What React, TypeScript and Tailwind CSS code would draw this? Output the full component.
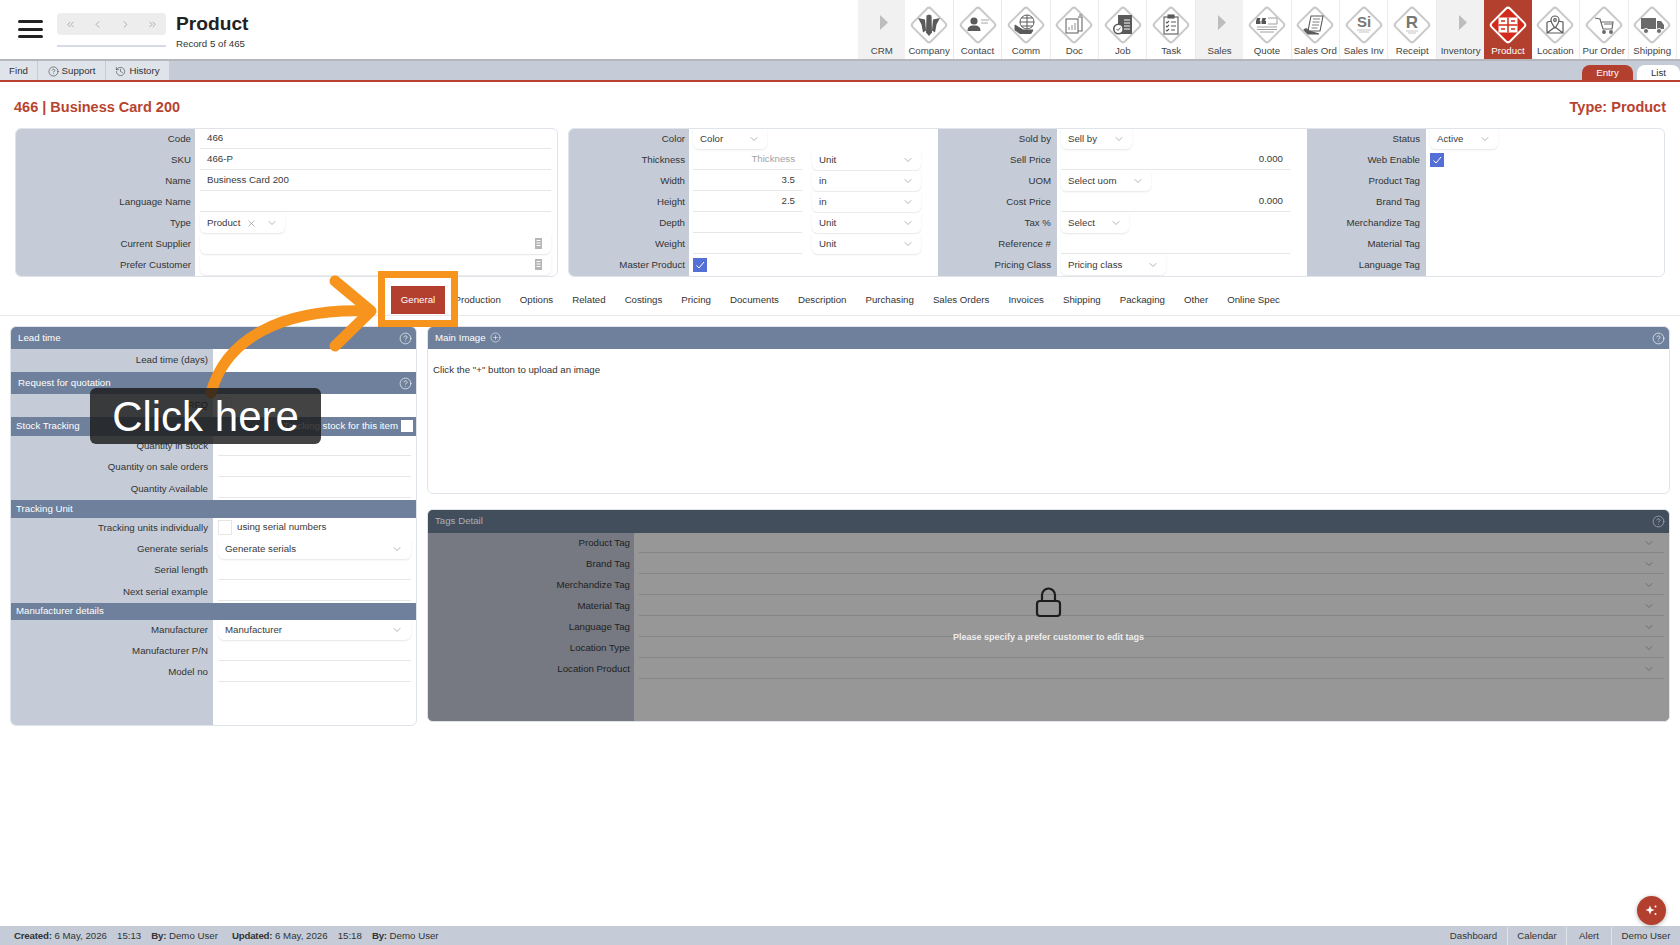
import type { ReactNode } from 'react';
import { ChevronDown, ChevronLeft, ChevronRight, ChevronsLeft, ChevronsRight, CircleHelp, CirclePlus, History, X } from 'lucide-react';

const tileIcons: Record<string, ReactNode> = {
  Company: (
    <g fill="#5a5a5a">
      <path d="M9 13l7 1.500 1 11-3 2-1.500-8z" />
      <path d="M17.500 10.500l2.500-1 2.500 1 .5 17-3 3.500-3-3.500z" />
      <path d="M31 13l-7 1.500-1 11 3 2 1.500-8z" />
    </g>
  ),
  Contact: (
    <g>
      <circle cx="16" cy="16" r="3.600" fill="#5a5a5a" />
      <path d="M9.500 26c0-4 2-5 4.500-5.500h4c2.500.5 4.500 1.500 4.500 5.500z" fill="#5a5a5a" />
      <path d="M23 15h8M23 18h7" stroke="#a5a5a5" strokeWidth="1.200" />
    </g>
  ),
  Comm: (
    <g fill="none" stroke="#5a5a5a" strokeWidth="1">
      <circle cx="21" cy="17" r="7" />
      <path d="M14 17h14M21 10v14M15.500 13h11M15.500 21h11" />
      <path d="M9 20l8 5h10l-2 3.500H14l-5-3.500z" fill="#5a5a5a" />
    </g>
  ),
  Doc: (
    <g fill="none" stroke="#6a6a6a" strokeWidth="1.100">
      <rect x="12" y="14" width="12" height="14" />
      <path d="M24 12h4v14h-4M25 10h3" />
      <path d="M15 25v-3M18 25v-5M21 25v-7" stroke="#9a9a9a" />
    </g>
  ),
  Job: (
    <g>
      <rect x="15" y="10" width="14" height="19" fill="#5a5a5a" />
      <path d="M21 15h6M21 18h6M21 21h6M21 24h6" stroke="#fff" />
      <circle cx="15.500" cy="24" r="4.700" fill="#fff" stroke="#5a5a5a" strokeWidth="1.600" />
      <path d="M13.500 24l1.500 1.500 2.500-3" stroke="#5a5a5a" fill="none" />
    </g>
  ),
  Task: (
    <g fill="none" stroke="#5a5a5a" strokeWidth="1.100">
      <rect x="13" y="12" width="14" height="17" />
      <rect x="17" y="10" width="6" height="3" fill="#5a5a5a" />
      <path d="M15 17l1 1 2-2M15 21l1 1 2-2M15 25l1 1 2-2M20 17h5M20 21h5M20 25h4" />
    </g>
  ),
  Quote: (
    <g>
      <path d="M10 13h3.500l-1 3h1v3H9v-3zM15.500 13H19l-1 3h1v3h-4.500v-3z" fill="#555" />
      <path d="M21 13h9v6h-9M10 22h20M10 24.500h20M13 27h14" fill="none" stroke="#a0a0a0" strokeWidth="1" />
    </g>
  ),
  'Sales Ord': (
    <g fill="none" stroke="#5a5a5a" strokeWidth="1.100">
      <path d="M16 11h12l-3 15H13z" fill="#fff" />
      <path d="M18 14h7M17.500 17h7M17 20h7M16.500 23h6" stroke="#808080" />
      <path d="M9 25c2-2 4-1 5 1l10 3H13z" fill="#5a5a5a" />
    </g>
  ),
  'Sales Inv': (
    <g>
      <text x="20" y="22" textAnchor="middle" fontSize="15" fontWeight="700" fontFamily="Liberation Sans" fill="#777">Si</text>
      <path d="M13 25h14M15 27h10" stroke="#c4c4c4" />
    </g>
  ),
  Receipt: (
    <g>
      <text x="20" y="23" textAnchor="middle" fontSize="17" fontWeight="700" fontFamily="Liberation Sans" fill="#777">R</text>
      <path d="M14 26h12M16 28h8" stroke="#c4c4c4" />
    </g>
  ),
  Location: (
    <g fill="none" stroke="#5a5a5a" strokeWidth="1.200">
      <path d="M12 17l5-1M23 16l5 1v11H12V17M12 28l8-6 8 6" />
      <path d="M20 23c-3-4-4-6-4-8a4 4 0 0 1 8 0c0 2-1 4-4 8z" fill="#fff" />
      <circle cx="20" cy="15" r="1.300" />
    </g>
  ),
  'Pur Order': (
    <g fill="none" stroke="#6a6a6a" strokeWidth="1.200">
      <path d="M11 13l5 1 3 10h9l1-7H17M20 19h8" />
      <circle cx="20" cy="27" r="1.300" fill="#6a6a6a" />
      <circle cx="27" cy="27" r="1.300" fill="#6a6a6a" />
    </g>
  ),
  Shipping: (
    <g fill="#6a6a6a">
      <rect x="9" y="13" width="15" height="11" />
      <path d="M25 16h4l3 4v4h-7z" />
      <circle cx="14" cy="26" r="2.500" stroke="#fff" />
      <circle cx="27" cy="26" r="2.500" stroke="#fff" />
    </g>
  ),
};

const tiles = ['CRM', 'Company', 'Contact', 'Comm', 'Doc', 'Job', 'Task', 'Sales', 'Quote', 'Sales Ord', 'Sales Inv', 'Receipt', 'Inventory', 'Product', 'Location', 'Pur Order', 'Shipping'];
const sectionTiles = ['CRM', 'Sales', 'Inventory'];
const tabs = ['Production', 'Options', 'Related', 'Costings', 'Pricing', 'Documents', 'Description', 'Purchasing', 'Sales Orders', 'Invoices', 'Shipping', 'Packaging', 'Other', 'Online Spec'];
const tagRows = ['Product Tag', 'Brand Tag', 'Merchandize Tag', 'Material Tag', 'Language Tag', 'Location Type', 'Location Product'];

function NavTile({ name }: Readonly<{ name: string }>) {
  if (sectionTiles.includes(name)) {
    return (
      <div className="flex flex-1 flex-col items-center bg-[#f1f1f1] pt-[15px]">
        <svg width="10" height="15" viewBox="0 0 10 15" className="ml-[4px]">
          <path d="M1 0l8 7.500-8 7.500z" fill="#bdbdbd" />
        </svg>
        <span className="mt-[15px] text-[9.7px] leading-[12px] text-[#444]">{name}</span>
      </div>
    );
  }
  const active = name === 'Product';
  return (
    <div className={`flex flex-1 flex-col items-center pt-[5px] ${active ? 'bg-[#b33f2e]' : 'border-r border-[#ebebeb] bg-white'}`}>
      <svg width="40" height="40" viewBox="0 0 40 40" className="shrink-0">
        <rect x="7" y="7" width="26" height="26" rx="3" transform="rotate(45 20 20)" fill={active ? '#d22b1c' : '#fff'} stroke={active ? '#fff' : '#c9c9c9'} strokeWidth="2" />
        {active ? (
          <g>
            <rect x="10.500" y="12.500" width="19" height="15" fill="#fff" />
            <path d="M20 12.500v15M10.500 20h19M13 16h4M23 16h4M13 24h4M23 24h4" stroke="#d22b1c" strokeWidth="1.500" />
          </g>
        ) : (
          tileIcons[name]
        )}
      </svg>
      <span className={`text-[9.7px] leading-[12px] ${active ? 'text-white' : 'text-[#444]'}`}>{name}</span>
    </div>
  );
}

function SelectBox({ value, width, full }: Readonly<{ value: string; width?: string; full?: boolean }>) {
  return (
    <div className={`flex h-[20px] items-center justify-between rounded-b-md bg-white pl-[7px] shadow-[0_1px_2px_rgba(0,0,0,0.1)] ${full ? 'flex-1 pr-[8px]' : `pr-[7px] ${width}`}`}>
      <span>{value}</span>
      <ChevronDown size={12} strokeWidth={1} className="text-[#666]" />
    </div>
  );
}

function TextField({ value, className, align }: Readonly<{ value?: string; className?: string; align?: 'right' }>) {
  return (
    <div className={`flex h-[20px] items-center border-b border-[#e4e6ea] px-[7px] ${align === 'right' ? 'justify-end' : ''} ${className ?? 'flex-1'}`}>
      {value}
    </div>
  );
}

function CheckMark() {
  return (
    <div className="flex h-[14px] w-[14px] items-center justify-center bg-[#5470d6]">
      <svg width="10" height="10" viewBox="0 0 10 10" fill="none" stroke="#fff" strokeWidth="1">
        <path d="M1.500 5.500l2.500 2.500 5-6" />
      </svg>
    </div>
  );
}

function OpenBox() {
  return <div className="h-[15px] w-[14px] border border-[#e5e5e5] bg-white" />;
}

function BuildingGlyph() {
  return (
    <svg width="7" height="11" viewBox="0 0 7 11" className="absolute right-[15px] top-[4px]">
      <rect width="7" height="11" fill="#b5b5b5" />
      <path d="M1.500 2.500h4M1.500 5h4M1.500 7.500h4" stroke="#fff" />
    </svg>
  );
}

function FormRow({ label, labelWidth, inset = 'pl-[4px]', children }: Readonly<{ label: string; labelWidth: string; inset?: string; children?: ReactNode }>) {
  return (
    <div className="flex h-[21px]">
      <div className={`flex shrink-0 items-center justify-end bg-[#c5ccd8] text-[#333] ${labelWidth}`}>{label}</div>
      <div className={`relative flex flex-1 items-start gap-[10px] pr-[6px] ${inset}`}>{children}</div>
    </div>
  );
}

function MainRow({ label, children }: Readonly<{ label: string; children?: ReactNode }>) {
  return (
    <FormRow label={label} labelWidth="w-[179px] pr-[4px]" inset="pl-[5px]">
      {children}
    </FormRow>
  );
}

function MeasureRow({ label, value, placeholder, unit }: Readonly<{ label: string; value?: string; placeholder?: string; unit: string }>) {
  return (
    <FormRow label={label} labelWidth="w-[120px] pr-[4px]">
      <div className={`flex h-[20px] w-[109px] items-center justify-end border-b border-[#e4e6ea] px-[7px] ${placeholder ? 'text-[#a3a3a3]' : ''}`}>
        {value ?? placeholder}
      </div>
      <SelectBox value={unit} width="w-[109px]" />
    </FormRow>
  );
}

function SectionBar({ title, className, children }: Readonly<{ title: string; className: string; children?: ReactNode }>) {
  return (
    <div className={`flex shrink-0 items-center justify-between bg-[#6e809b] text-white ${className}`}>
      <span>{title}</span>
      {children}
    </div>
  );
}

function HelpIcon() {
  return <CircleHelp size={13} strokeWidth={1.4} className="text-[#eef1f5]" />;
}

function LeftRow({ label, height = 'h-[21px]', children }: Readonly<{ label: string; height?: string; children?: ReactNode }>) {
  return (
    <div className={`flex ${height}`}>
      <div className="flex w-[202px] shrink-0 items-center justify-end bg-[#c5ccd8] pr-[5px] text-[#333]">{label}</div>
      <div className="flex flex-1 items-start pl-[5px] pr-[5px]">{children}</div>
    </div>
  );
}

export default function App() {
  return (
    <div className="relative flex h-[945px] w-[1680px] flex-col overflow-hidden bg-white font-['Liberation_Sans',Arial,sans-serif] text-[9.7px] text-[#3a3a3a]">
      <header className="flex h-[61px] shrink-0 border-b-2 border-[#b4b8bd]">
        <div className="flex w-[57px] flex-col items-center gap-[4.500px] pl-[4px] pt-[20px]">
          <div className="h-[3px] w-[25px] rounded-sm bg-[#222]" />
          <div className="h-[3px] w-[25px] rounded-sm bg-[#222]" />
          <div className="h-[3px] w-[25px] rounded-sm bg-[#222]" />
        </div>
        <div className="w-[109px] pt-[13px]">
          <div className="flex h-[22px] items-center justify-between rounded bg-[#ededed] px-[8px] text-[#8d8d8d]">
            <ChevronsLeft size={11} strokeWidth={1.5} />
            <ChevronLeft size={11} strokeWidth={1.5} />
            <ChevronRight size={11} strokeWidth={1.5} />
            <ChevronsRight size={11} strokeWidth={1.5} />
          </div>
          <div className="mt-[10px] h-[1.500px] bg-[#d5dce6]" />
        </div>
        <div className="ml-[10px] pt-[14px]">
          <div className="text-[19.200px] font-bold leading-[20px] text-[#222]">Product</div>
          <div className="mt-[4px] text-[9.700px] leading-[12px] text-[#333]">Record 5 of 465</div>
        </div>
        <nav className="ml-auto mr-[3px] flex w-[819px]">
          {tiles.map((name) => (
            <NavTile key={name} name={name} />
          ))}
        </nav>
      </header>

      <div className="flex h-[21px] shrink-0 justify-between border-b-2 border-[#b9402f] bg-[#c5ccd8]">
        <div className="flex gap-px pb-0 text-[#333]">
          <div className="flex w-[37px] items-center justify-center bg-[#dfe3ea] pt-px">Find</div>
          <div className="flex w-[67px] items-center justify-center gap-[3px] bg-[#dfe3ea] pt-px">
            <CircleHelp size={11} strokeWidth={1.200} />
            Support
          </div>
          <div className="flex w-[63px] items-center justify-center gap-[3px] bg-[#dfe3ea] pt-px">
            <History size={11} strokeWidth={1.200} />
            History
          </div>
        </div>
        <div className="flex items-end gap-[4px] pt-[4px]">
          <div className="flex h-[15px] w-[51px] items-center justify-center rounded-t-lg bg-[#b33f2e] pt-px text-white">Entry</div>
          <div className="flex h-[15px] w-[43px] items-center justify-center rounded-t-lg bg-white pt-px text-[#333]">List</div>
        </div>
      </div>

      <div className="flex h-[46px] shrink-0 justify-between px-[14px] pt-[16px] text-[14.500px] font-bold leading-[18px] text-[#b8432f]">
        <span>466 | Business Card 200</span>
        <span>Type: Product</span>
      </div>

      <div className="flex shrink-0 gap-[10px] pl-[15px] pr-[15px]">
        <section className="w-[543px] overflow-hidden rounded-md border border-[#dfe3ea]">
          <MainRow label="Code"><TextField value="466" /></MainRow>
          <MainRow label="SKU"><TextField value="466-P" /></MainRow>
          <MainRow label="Name"><TextField value="Business Card 200" /></MainRow>
          <MainRow label="Language Name"><TextField /></MainRow>
          <MainRow label="Type">
            <div className="flex h-[20px] w-[85px] items-center rounded-b-md bg-white pl-[7px] shadow-[0_1px_2px_rgba(0,0,0,0.1)]">
              <span>Product</span>
              <X size={11} strokeWidth={1} className="ml-[6px] text-[#666]" />
              <ChevronDown size={12} strokeWidth={1} className="ml-[9px] text-[#666]" />
            </div>
          </MainRow>
          <MainRow label="Current Supplier">
            <div className="h-[20px] flex-1 rounded-b-md shadow-[0_1px_2px_rgba(0,0,0,0.1)]" />
            <BuildingGlyph />
          </MainRow>
          <MainRow label="Prefer Customer">
            <div className="h-[20px] flex-1 rounded-b-md shadow-[0_1px_2px_rgba(0,0,0,0.1)]" />
            <BuildingGlyph />
          </MainRow>
        </section>

        <section className="flex flex-1 overflow-hidden rounded-md border border-[#dfe3ea]">
          <div className="w-[369px]">
            <FormRow label="Color" labelWidth="w-[120px] pr-[4px]"><SelectBox value="Color" width="w-[74px]" /></FormRow>
            <MeasureRow label="Thickness" placeholder="Thickness" unit="Unit" />
            <MeasureRow label="Width" value="3.5" unit="in" />
            <MeasureRow label="Height" value="2.5" unit="in" />
            <MeasureRow label="Depth" value="" unit="Unit" />
            <MeasureRow label="Weight" value="" unit="Unit" />
            <FormRow label="Master Product" labelWidth="w-[120px] pr-[4px]"><div className="pt-[3px]"><CheckMark /></div></FormRow>
          </div>
          <div className="w-[369px]">
            <FormRow label="Sold by" labelWidth="w-[119px] pr-[6px]"><SelectBox value="Sell by" width="w-[71px]" /></FormRow>
            <FormRow label="Sell Price" labelWidth="w-[119px] pr-[6px]"><TextField value="0.000" align="right" className="w-[229px]" /></FormRow>
            <FormRow label="UOM" labelWidth="w-[119px] pr-[6px]"><SelectBox value="Select uom" width="w-[90px]" /></FormRow>
            <FormRow label="Cost Price" labelWidth="w-[119px] pr-[6px]"><TextField value="0.000" align="right" className="w-[229px]" /></FormRow>
            <FormRow label="Tax %" labelWidth="w-[119px] pr-[6px]"><SelectBox value="Select" width="w-[68px]" /></FormRow>
            <FormRow label="Reference #" labelWidth="w-[119px] pr-[6px]"><TextField className="w-[229px]" /></FormRow>
            <FormRow label="Pricing Class" labelWidth="w-[119px] pr-[6px]"><SelectBox value="Pricing class" width="w-[105px]" /></FormRow>
          </div>
          <div className="flex-1">
            <FormRow label="Status" labelWidth="w-[119px] pr-[6px]"><SelectBox value="Active" width="w-[68px]" /></FormRow>
            <FormRow label="Web Enable" labelWidth="w-[119px] pr-[6px]"><div className="pt-[3px]"><CheckMark /></div></FormRow>
            <FormRow label="Product Tag" labelWidth="w-[119px] pr-[6px]" />
            <FormRow label="Brand Tag" labelWidth="w-[119px] pr-[6px]" />
            <FormRow label="Merchandize Tag" labelWidth="w-[119px] pr-[6px]" />
            <FormRow label="Material Tag" labelWidth="w-[119px] pr-[6px]" />
            <FormRow label="Language Tag" labelWidth="w-[119px] pr-[6px]" />
          </div>
        </section>
      </div>

      <div className="mt-[9px] flex h-[30px] shrink-0 items-stretch border-b border-[#e8e8e8] pl-[391px] text-[#333]">
        <div className="mb-px flex w-[54px] items-center justify-center bg-[#b33f2e] text-white">General</div>
        {tabs.map((tab) => (
          <div key={tab} className="flex items-center px-[9.500px]">{tab}</div>
        ))}
      </div>

      <div className="mt-[10px] flex flex-1 items-start gap-[10px] px-[10px]">
        <section className="flex h-[400px] w-[407px] flex-col overflow-hidden rounded-md border border-[#dfe3ea]">
          <SectionBar title="Lead time" className="h-[22px] pl-[7px] pr-[4px]"><HelpIcon /></SectionBar>
          <LeftRow label="Lead time (days)" height="h-[23px]" />
          <SectionBar title="Request for quotation" className="h-[22px] pl-[7px] pr-[4px]"><HelpIcon /></SectionBar>
          <LeftRow label="RFQ" height="h-[23px]"><div className="pt-[3px]"><OpenBox /></div></LeftRow>
          <SectionBar title="Stock Tracking" className="h-[19px] pl-[5px] pr-[3px]">
            <div className="flex items-center gap-[3px]">
              Tracking stock for this item
              <div className="h-[12px] w-[12px] bg-white" />
            </div>
          </SectionBar>
          <LeftRow label="Quantity in stock"><TextField /></LeftRow>
          <LeftRow label="Quantity on sale orders"><TextField /></LeftRow>
          <LeftRow label="Quantity Available" height="h-[22px]"><TextField /></LeftRow>
          <SectionBar title="Tracking Unit" className="h-[18px] pl-[5px]" />
          <LeftRow label="Tracking units individually">
            <div className="flex items-center gap-[5px] pt-[2px]">
              <OpenBox />
              <span>using serial numbers</span>
            </div>
          </LeftRow>
          <LeftRow label="Generate serials"><SelectBox value="Generate serials" full /></LeftRow>
          <LeftRow label="Serial length"><TextField /></LeftRow>
          <LeftRow label="Next serial example" height="h-[22px]"><TextField /></LeftRow>
          <SectionBar title="Manufacturer details" className="h-[17px] pl-[5px]" />
          <LeftRow label="Manufacturer"><SelectBox value="Manufacturer" full /></LeftRow>
          <LeftRow label="Manufacturer P/N"><TextField /></LeftRow>
          <LeftRow label="Model no"><TextField /></LeftRow>
          <LeftRow label="" height="flex-1" />
        </section>

        <div className="flex flex-1 flex-col">
          <section className="h-[168px] overflow-hidden rounded-md border border-[#dfe3ea]">
            <div className="flex h-[22px] items-center justify-between bg-[#6e809b] pl-[7px] pr-[4px] text-white">
              <span className="flex items-center gap-[4px]">
                Main Image
                <CirclePlus size={11} strokeWidth={1.200} />
              </span>
              <HelpIcon />
            </div>
            <p className="pl-[5px] pt-[15px] leading-[12px] text-[#333]">Click the "+" button to upload an image</p>
          </section>

          <section className="relative mt-[15px] h-[213px] overflow-hidden rounded-md border border-[#dfe3ea] bg-[#979797]">
            <div className="flex h-[23px] items-center justify-between bg-[#434e5c] pl-[7px] pr-[4px] text-[#a9afb8]">
              <span>Tags Detail</span>
              <CircleHelp size={13} strokeWidth={1.400} className="text-[#a9afb8]" />
            </div>
            <div className="flex h-[189px] flex-col bg-[#979797]">
              {tagRows.map((row) => (
                <div key={row} className="flex h-[21px]">
                  <div className="flex w-[206px] shrink-0 items-center justify-end bg-[#767982] pr-[4px] text-[#1f1f1f]">{row}</div>
                  <div className="ml-[5px] flex h-[20px] flex-1 items-center justify-end border-b border-[#858585] pr-[9px]">
                    <ChevronDown size={12} strokeWidth={1} className="text-[#444]" />
                  </div>
                  <div className="w-[5px] shrink-0" />
                </div>
              ))}
              <div className="w-[206px] flex-1 bg-[#767982]" />
            </div>
            <div className="absolute inset-x-0 top-[77px] flex flex-col items-center">
              <svg width="27" height="31" viewBox="0 0 27 31" fill="none" stroke="#1d1d1d" strokeWidth="2.200">
                <path d="M7 15V8a6.500 6.500 0 0 1 13 0v7" />
                <rect x="2" y="14" width="23" height="15" rx="3" />
              </svg>
              <span className="mt-[13px] text-[9px] font-bold leading-[12px] text-[#eeeeee]">Please specify a prefer customer to edit tags</span>
            </div>
          </section>
        </div>
      </div>

      <footer className="flex h-[19px] shrink-0 items-stretch justify-between bg-[#c5ccd8] pl-[14px] pt-px text-[#333]">
        <div className="flex items-center gap-[14px]">
          <span className="flex gap-[10px]">
            <span><b className="tracking-[-0.2px]">Created:</b> 6 May, 2026</span>
            <span>15:13</span>
            <span><b className="tracking-[-0.2px]">By:</b> Demo User</span>
          </span>
          <span className="flex gap-[10px]">
            <span><b className="tracking-[-0.2px]">Updated:</b> 6 May, 2026</span>
            <span>15:18</span>
            <span><b className="tracking-[-0.2px]">By:</b> Demo User</span>
          </span>
        </div>
        <div className="flex">
          <div className="flex w-[68px] items-center justify-center border-r border-[#dfe3ea]">Dashboard</div>
          <div className="flex w-[59px] items-center justify-center border-r border-[#dfe3ea]">Calendar</div>
          <div className="flex w-[45px] items-center justify-center border-r border-[#dfe3ea]">Alert</div>
          <div className="flex w-[68px] items-center justify-center">Demo User</div>
        </div>
      </footer>

      <button className="absolute left-[1637px] top-[896px] flex h-[29px] w-[29px] items-center justify-center rounded-full bg-[#b33f2e] shadow-[0_1px_4px_rgba(0,0,0,0.3)]">
        <svg width="13" height="13" viewBox="0 0 13 13" fill="#fff">
          <path d="M5 1.500l1.300 3.200L9.500 6 6.300 7.300 5 10.500 3.700 7.300.5 6l3.200-1.300z" />
          <circle cx="10.500" cy="2.500" r="1" />
          <circle cx="10.500" cy="10" r="1" />
        </svg>
      </button>

      <div className="absolute left-[378px] top-[271px] h-[56px] w-[80px] border-[7px] border-[#f7941d]" />
      <svg width="1680" height="945" className="pointer-events-none absolute left-0 top-0" fill="none" stroke="#f7941d" strokeWidth="11" strokeLinecap="round" strokeLinejoin="round">
        <path d="M211 393C225 340 280 308 368 311" />
        <path d="M335 281L371 311L335 346" />
      </svg>
      <div className="absolute left-[90px] top-[388px] flex h-[56px] w-[231px] items-center justify-center rounded-md bg-[#1a1a1a]/[.82] pt-px text-[42px] leading-none text-white">
        Click here
      </div>
    </div>
  );
}
